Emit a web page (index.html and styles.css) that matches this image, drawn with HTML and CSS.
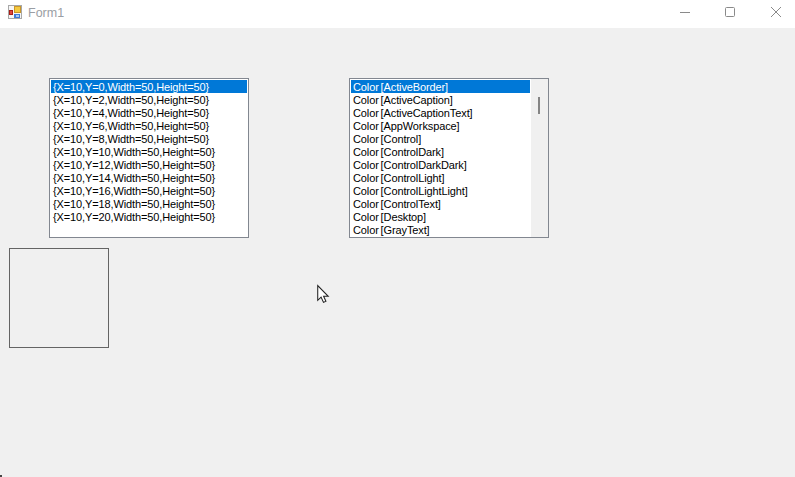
FILE: index.html
```html
<!DOCTYPE html>
<html lang="en">
<head>
  <meta charset="UTF-8" />
  <meta name="viewport" content="width=device-width, initial-scale=1.0" />
  <title>Form1</title>
  <link rel="stylesheet" href="styles.css">
</head>
<body>

  <header class="titlebar">
    <svg class="app-icon" width="14" height="14" viewBox="0 0 14 14">
      <rect x="0.5" y="0.5" width="13" height="13" fill="#f6f6f6" stroke="#a8a8a8"/>
      <rect x="6" y="1" width="7" height="7" fill="#c9962a"/>
      <rect x="7" y="2" width="5" height="5" fill="#f4c93e"/>
      <rect x="1" y="5" width="4" height="5" fill="#a81f18"/>
      <rect x="2" y="6" width="2" height="3" fill="#e0463a"/>
      <rect x="6" y="9" width="6" height="4" fill="#3f7bd8"/>
      <rect x="8" y="10" width="3" height="2" fill="#a9c9f2"/>
    </svg>
    <span class="title">Form1</span>
    <div class="controls">
      <svg class="ctl minimize" width="10" height="10" viewBox="0 0 10 10"><path d="M0 5.5h10" stroke="#8a8a8a" fill="none"/></svg>
      <svg class="ctl" width="10" height="10" viewBox="0 0 10 10"><rect x="0.5" y="0.5" width="9" height="9" rx="1" stroke="#8a8a8a" fill="none"/></svg>
      <svg class="ctl" width="10" height="10" viewBox="0 0 10 10"><path d="M0 0l10 10M10 0L0 10" stroke="#8a8a8a" fill="none"/></svg>
    </div>
  </header>

  <main class="form">
    <div class="lists">
      <ul class="listbox">
        <li class="selected">{X=10,Y=0,Width=50,Height=50}</li>
        <li>{X=10,Y=2,Width=50,Height=50}</li>
        <li>{X=10,Y=4,Width=50,Height=50}</li>
        <li>{X=10,Y=6,Width=50,Height=50}</li>
        <li>{X=10,Y=8,Width=50,Height=50}</li>
        <li>{X=10,Y=10,Width=50,Height=50}</li>
        <li>{X=10,Y=12,Width=50,Height=50}</li>
        <li>{X=10,Y=14,Width=50,Height=50}</li>
        <li>{X=10,Y=16,Width=50,Height=50}</li>
        <li>{X=10,Y=18,Width=50,Height=50}</li>
        <li>{X=10,Y=20,Width=50,Height=50}</li>
      </ul>
      <div class="listbox scrolling">
        <ul class="items">
          <li class="selected">Color [ActiveBorder]</li>
          <li>Color [ActiveCaption]</li>
          <li>Color [ActiveCaptionText]</li>
          <li>Color [AppWorkspace]</li>
          <li>Color [Control]</li>
          <li>Color [ControlDark]</li>
          <li>Color [ControlDarkDark]</li>
          <li>Color [ControlLight]</li>
          <li>Color [ControlLightLight]</li>
          <li>Color [ControlText]</li>
          <li>Color [Desktop]</li>
          <li>Color [GrayText]</li>
        </ul>
        <div class="scrollbar"><div class="thumb"></div></div>
      </div>
    </div>
    <div class="panel"></div>
  </main>

  <svg class="cursor" width="15" height="21" viewBox="0 0 14 20">
    <path d="M1.5 1.5v14l3.2-3 2.3 5 2.3-1-2.2-4.8h4.4z" fill="#fff" stroke="#222" stroke-width="1"/>
  </svg>
  <div class="corner"></div>

</body>
</html>
```

FILE: styles.css
```css
* {
  margin: 0;
  padding: 0;
  box-sizing: border-box;
}

html,
body {
  height: 100%;
  overflow: hidden;
}

body {
  display: flex;
  flex-direction: column;
  background: #f0f0f0;
  font-family: "Liberation Sans", Arial, sans-serif;
  font-size: 11px;
  color: #000;
}

.titlebar {
  height: 28px;
  flex: none;
  display: flex;
  align-items: center;
  background: #fff;
  padding-left: 8px;
}

.app-icon {
  margin-top: -4px;
}

.title {
  margin-left: 6px;
  margin-top: -2px;
  font-size: 12.5px;
  color: #9a9ea4;
}

.controls {
  margin-left: auto;
  display: flex;
  gap: 36px;
  padding-right: 14px;
  margin-top: -4px;
}

.minimize {
  margin-right: -1px;
}

.form {
  flex: 1;
  padding: 50px 0 0 9px;
}

.lists {
  display: flex;
  gap: 100px;
  margin-left: 40px;
}

.listbox {
  width: 200px;
  height: 160px;
  background: #fff;
  border: 1px solid #828790;
  list-style: none;
  padding: 1px;
  overflow: hidden;
}

.listbox li {
  height: 13px;
  line-height: 15px;
  padding-left: 2px;
  white-space: nowrap;
  letter-spacing: -0.12px;
}

.listbox li.selected {
  background: #0078d7;
  color: #fff;
}

.scrolling {
  display: flex;
  padding-right: 0;
}

.items {
  flex: 1;
  list-style: none;
  min-width: 0;
  word-spacing: -1px;
}

.scrollbar {
  width: 17px;
  flex: none;
  margin: -1px 0 -1px 1px;
  background: #f0f0f0;
  padding: 18px 0 0 7px;
}

.thumb {
  width: 2px;
  height: 17px;
  background: #858585;
}

.panel {
  width: 100px;
  height: 100px;
  margin-top: 10px;
  border: 1px solid #646464;
}

/* pointer sits over the form */
.cursor {
  position: absolute;
  left: 316px;
  top: 284px;
}

/* dark sliver of desktop at the rounded window corner */
.corner {
  position: absolute;
  left: 0;
  bottom: 0;
  width: 2px;
  height: 2px;
  background: #444;
}
```
